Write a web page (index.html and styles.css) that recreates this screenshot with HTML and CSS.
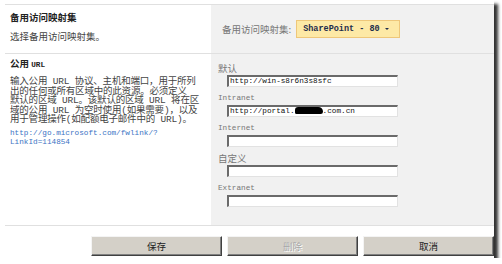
FILE: index.html
```html
<!DOCTYPE html>
<html lang="zh-CN">
<head>
    <meta charset="UTF-8">
    <title>备用访问映射</title>
    <link rel="stylesheet" href="styles.css">
</head>
<body>
    <div class="frame">
        <div class="section section-top">
            <div class="info">
                <h3 class="title">备用访问映射集</h3>
                <p class="desc">选择备用访问映射集。</p>
            </div>
            <div class="panel panel-select">
                <span class="label">备用访问映射集:</span>
                <span class="dropdown">SharePoint - 80 <span class="arrow"></span></span>
            </div>
        </div>
        <div class="section section-url">
            <div class="info">
                <h3 class="title">公用 <span class="mono">URL</span></h3>
                <p class="desc long">输入公用 URL 协议、主机和端口，用于所列<br>出的任何或所有区域中的此资源。必须定义<br>默认的区域 URL。该默认的区域 URL 将在区<br>域的公用 URL 为空时使用(如果需要)，以及<br>用于管理操作(如配额电子邮件中的 URL)。</p>
                <a class="link" href="#">http://go.microsoft.com/fwlink/?LinkId=114854</a>
            </div>
            <div class="panel panel-fields">
                <div class="field">
                    <div class="label">默认</div>
                    <div class="textbox">http://win-s8r6n3s8sfc</div>
                </div>
                <div class="field">
                    <div class="label mono">Intranet</div>
                    <div class="textbox">http://portal.<span class="redact"></span>.com.cn</div>
                </div>
                <div class="field">
                    <div class="label mono">Internet</div>
                    <div class="textbox"></div>
                </div>
                <div class="field">
                    <div class="label">自定义</div>
                    <div class="textbox"></div>
                </div>
                <div class="field">
                    <div class="label mono">Extranet</div>
                    <div class="textbox"></div>
                </div>
            </div>
        </div>
        <div class="buttons">
            <button class="btn">保存</button>
            <button class="btn" disabled>删除</button>
            <button class="btn">取消</button>
        </div>
    </div>
</body>
</html>
```

FILE: styles.css
```css
body {
    margin: 0;
    background-color: #fff;
    font-family: "Noto Sans CJK SC", sans-serif;
    font-size: 9.5px;
    color: #333;
}
.frame {
    width: 489px;
    height: 254px;
    padding: 4px 0 0 5px;
    background-color: #fff;
    box-shadow: 4px 4px 3px rgba(0, 0, 0, 0.8);
}
.section {
    display: flex;
    border-top: 1px solid #e0e0e0;
}
.section-url {
    border-bottom: 1px solid #e0e0e0;
}
.info {
    width: 196px;
    flex-shrink: 0;
    padding: 0 5px;
    background-color: #fff;
}
.panel {
    flex: 1;
    background-color: #f1f1f1; /* columna gris */
}
.section-top .info,
.section-top .panel {
    height: 48px;
}
.title {
    margin: 0;
    padding-top: 5px;
    font-size: 9.5px;
    line-height: 14px;
    font-weight: bold;
    color: #222;
}
.section-url .title {
    padding-top: 2px;
}
.desc {
    margin: 5px 0 0;
    line-height: 14px;
    color: #444;
}
.desc.long {
    margin-top: 5px;
    line-height: 9.5px;
    white-space: nowrap;
    font-family: "Liberation Mono", "Noto Sans CJK SC", monospace;
    letter-spacing: -0.2px;
}
.mono {
    font-family: "Liberation Mono", monospace;
    font-size: 7.7px;
}
.link {
    display: block;
    margin-top: 4px;
    width: 185px;
    font-family: "Liberation Mono", monospace;
    font-size: 7.7px;
    line-height: 9px;
    color: #3b73c4;
    text-decoration: none;
}
.panel-select {
    display: flex;
    align-items: center;
    gap: 5px;
    padding-left: 11px;
}
.panel-select .label {
    color: #777;
}
.dropdown {
    display: flex;
    align-items: center;
    gap: 5px;
    height: 16px;
    padding: 0 10px 0 6px;
    background-color: #fde9a6;
    border: 1px solid #eec77a;
    font-family: "Liberation Mono", monospace;
    font-size: 8.5px;
    font-weight: bold;
    color: #1e2d4c;
}
.arrow {
    width: 0;
    height: 0;
    border-left: 2px solid transparent;
    border-right: 2px solid transparent;
    border-top: 2px solid #1e2d4c;
}
.panel-fields {
    padding: 7px 0 14px 7px;
}
.field {
    margin-bottom: 4px;
}
.field .label {
    height: 14px;
    line-height: 14px;
    color: #777;
}
.textbox {
    width: 166px;
    height: 9px;
    margin-left: 9px;
    padding: 0 1px;
    background-color: #fff;
    border-top: 2px solid #6a6a6a;
    border-left: 2px solid #6a6a6a;
    border-bottom: 1px solid #e2e2e2;
    border-right: 1px solid #e2e2e2;
    font-family: "Liberation Mono", monospace;
    font-size: 7.7px;
    line-height: 9px;
    color: #111;
    white-space: nowrap;
    overflow: hidden;
}
.redact {
    display: inline-block;
    width: 28px;
    height: 7px;
    background-color: #000;
    border-radius: 4px 6px 3px 2px;
    vertical-align: -1px;
}
.buttons {
    display: flex;
    justify-content: flex-end;
    gap: 5px;
    margin-top: 10px;
}
.btn {
    width: 131px;
    height: 20px;
    padding: 0;
    background-color: #d4d0c8;
    border: 1px solid;
    border-color: #f4f4f4 #404040 #404040 #f4f4f4;
    box-shadow: inset -1px -1px #808080;
    font-family: "Noto Sans CJK SC", sans-serif;
    font-size: 9.5px;
    color: #222;
}
.btn:disabled {
    color: #a8a8a8;
    text-shadow: 1px 1px #fff;
}
```
